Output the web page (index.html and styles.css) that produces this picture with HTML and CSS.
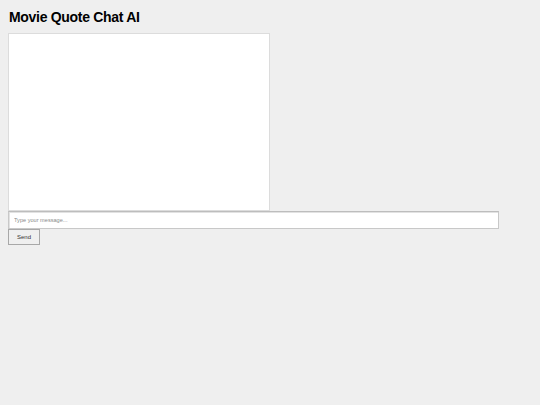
FILE: index.html
```html
<!DOCTYPE html>
<html>
<head>
<meta charset="utf-8">
<title>Movie Quote Chat AI</title>
<link rel="stylesheet" href="styles.css">
</head>
<body>
<h1 class="title">Movie Quote Chat AI</h1>
<div class="chat"></div>
<div class="composer">
  <input class="msg" type="text" placeholder="Type your message...">
  <button class="send">Send</button>
</div>
</body>
</html>
```
FILE: styles.css
```css
html, body { margin: 0; padding: 0; }
body {
  background: #efefef;
  font-family: "Liberation Sans", Arial, sans-serif;
  padding: 8px;
  height: 405px;
  box-sizing: border-box;
}
.title {
  font-size: 14px;
  letter-spacing: -0.3px;
  font-weight: bold;
  margin: 2px 0 9px 1px;
  line-height: 14px;
  color: #000;
}
.chat {
  width: 262px;
  height: 178px;
  box-sizing: border-box;
  background: #fff;
  border: 1px solid #dcdcdc;
}
.composer {
  display: flex;
  flex-direction: column;
  align-items: flex-start;
}
.msg {
  width: 491px;
  height: 18px;
  box-sizing: border-box;
  margin: 0;
  padding: 0 5px;
  border: 1px solid #c8c8c8;
  border-top-color: #bdbdbd;
  box-shadow: inset 1px 1px 0 #e2e2e2;
  background: #fff;
  font-family: "Liberation Sans", Arial, sans-serif;
  font-size: 5.6px;
  outline: none;
}
.msg::placeholder { color: #8a8a8a; }
.send {
  width: 32px;
  height: 16px;
  box-sizing: border-box;
  margin: 0;
  padding: 0;
  border: 1px solid #a8a8a8;
  background: #efefef;
  font-family: "Liberation Sans", Arial, sans-serif;
  font-size: 6px;
  color: #333;
}
```
